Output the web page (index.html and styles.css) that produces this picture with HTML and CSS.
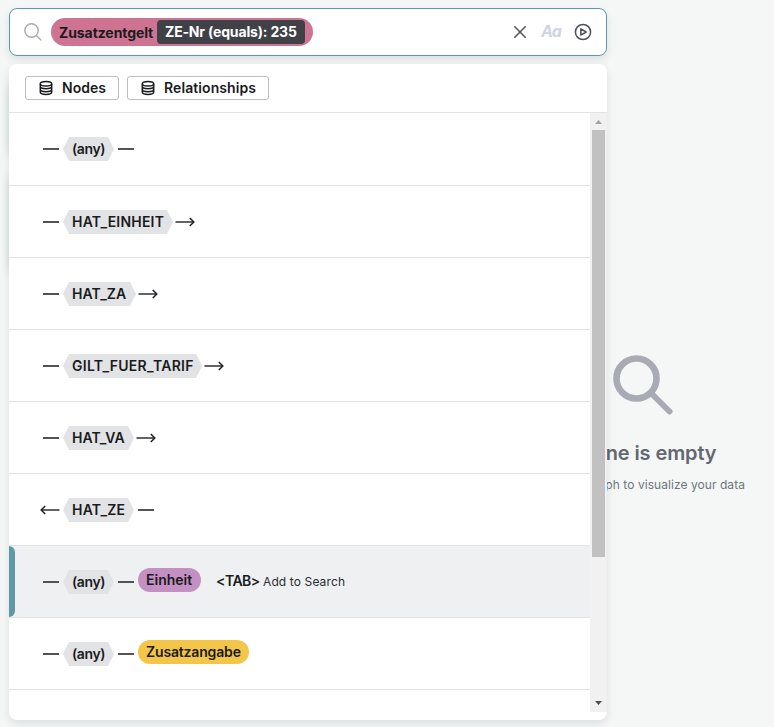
FILE: index.html
```
<!DOCTYPE html>
<html lang="en">
<head>
<meta charset="utf-8">
<title>Graph search</title>
<link rel="stylesheet" href="styles.css">
</head>
<body>
<svg class="defs" aria-hidden="true">
  <symbol id="db" viewBox="0 0 14 16"><g fill="none" stroke="#1a1b1d" stroke-width="1.5"><ellipse cx="7" cy="3.7" rx="5.7" ry="2.3"/><path d="M1.3 3.7v8.4c0 1.3 2.5 2.4 5.7 2.4s5.7-1.1 5.7-2.4V3.7M1.3 6.6c0 1.2 2.5 2.1 5.7 2.1s5.7-.9 5.7-2.1M1.3 9.6c0 1.2 2.5 2.1 5.7 2.1s5.7-.9 5.7-2.1"/></g></symbol>
  <symbol id="arrow" viewBox="0 0 20 12"><path d="M.5 6H18" fill="none" stroke="#3c3d40" stroke-width="1.6"/><path d="M14.8 2 18.8 6l-4 4" fill="none" stroke="#1f2023" stroke-width="1.5"/></symbol>
</svg>

<section class="empty">
  <svg class="empty-icon" viewBox="0 0 60 60" fill="none" stroke="#a8abb4"><circle cx="23.5" cy="23.5" r="20" stroke-width="6.6"/><path d="M38.5 38.5 56.5 56.5" stroke-width="6" stroke-linecap="round"/></svg>
  <h1>Scene is empty</h1>
  <p>Search graph to visualize your data</p>
</section>
<div class="backdrop-card first"></div>
<div class="backdrop-card second"></div>

<main class="search">
  <div class="search-bar">
    <svg class="lens" viewBox="0 0 18 18" fill="none" stroke="#a8abb4" stroke-width="1.4" stroke-linecap="round"><circle cx="7.5" cy="7.5" r="6.7"/><path d="m12.4 12.4 4.5 4.5"/></svg>
    <div class="token"><span class="t-label">Zusatzentgelt</span><span class="filter"><span class="t-filter">ZE-Nr (equals): 235</span></span></div>
    <div class="actions">
      <svg class="close" viewBox="0 0 12 12" stroke="#4d5157" stroke-width="1.5" stroke-linecap="round"><path d="m.8.8 10.4 10.4M11.2.8.8 11.2"/></svg>
      <span class="case">Aa</span>
      <svg class="play" viewBox="0 0 18 18" fill="none" stroke="#4d5157" stroke-width="1.5" stroke-linejoin="round"><circle cx="9" cy="9" r="7.6"/><path d="M6.8 5.9v6.2L12.2 9z"/></svg>
    </div>
  </div>

  <div class="panel">
    <div class="filters">
      <button class="nodes"><svg><use href="#db"/></svg><span>Nodes</span></button>
      <button class="rels"><svg><use href="#db"/></svg><span>Relationships</span></button>
    </div>
    <div class="results">
      <ul>
        <li><i class="dash"></i><span class="tag w-any"><b>(any)</b></span><i class="dash"></i></li>
        <li><i class="dash"></i><span class="tag w-einheit"><b>HAT_EINHEIT</b></span><svg class="arrow"><use href="#arrow"/></svg></li>
        <li><i class="dash"></i><span class="tag w-za"><b>HAT_ZA</b></span><svg class="arrow"><use href="#arrow"/></svg></li>
        <li><i class="dash"></i><span class="tag w-tarif"><b>GILT_FUER_TARIF</b></span><svg class="arrow"><use href="#arrow"/></svg></li>
        <li><i class="dash"></i><span class="tag w-va"><b>HAT_VA</b></span><svg class="arrow"><use href="#arrow"/></svg></li>
        <li><svg class="arrow left"><use href="#arrow"/></svg><span class="tag w-ze"><b>HAT_ZE</b></span><i class="dash"></i></li>
        <li class="active"><i class="dash"></i><span class="tag w-any"><b>(any)</b></span><i class="dash"></i><span class="pill purple"><b>Einheit</b></span><span class="hint"><b>&lt;TAB&gt;</b><span>Add to Search</span></span></li>
        <li><i class="dash"></i><span class="tag w-any"><b>(any)</b></span><i class="dash"></i><span class="pill yellow"><b>Zusatzangabe</b></span></li>
        <li class="rest"></li>
      </ul>
      <div class="scrollbar"><span class="up"></span><span class="thumb"></span><span class="down"></span></div>
    </div>
  </div>
</main>
</body>
</html>
```

FILE: styles.css
```
* { box-sizing: border-box; }
body {
  margin: 0;
  width: 774px;
  height: 727px;
  overflow: hidden;
  position: relative;
  background: #f4f7f6;
  color: #1a1b1d;
  font-family: Inter, "Liberation Sans", sans-serif;
  font-size: 14px;
}
.defs { position: absolute; width: 0; height: 0; }
svg { display: block; flex: none; }
b, i { font-style: normal; }

.empty {
  position: absolute;
  left: 513px;
  top: 355px;
  width: 260px;
  display: flex;
  flex-direction: column;
  align-items: center;
  color: #6f757e;
  white-space: nowrap;
}
.empty-icon { width: 60px; height: 60px; }
.empty h1 { margin: 24px 0 0; font-size: 20px; line-height: 28px; font-weight: 600; color: #636770; letter-spacing: -.1px; }
.empty p { margin: 8px 0 0; width: 204px; text-align: right; font-size: 12px; line-height: 20px; letter-spacing: .06px; }

.backdrop-card { position: absolute; left: 9px; width: 300px; border-radius: 8px; background: #fff; box-shadow: 0 2px 8px rgba(12, 26, 37, .14); }
.backdrop-card.first { top: 80px; height: 75px; }
.backdrop-card.second { top: 172px; height: 100px; }

.search { position: relative; width: 598px; margin: 8px 0 0 9px; display: flex; flex-direction: column; gap: 8px; }
.search-bar {
  height: 48px;
  display: flex;
  align-items: center;
  padding: 0 14px;
  border: 1px solid #5a9aa6;
  border-radius: 8px;
  background: #fff;
  box-shadow: 0 4px 8px rgba(12, 26, 37, .1);
}
.lens { width: 18px; height: 18px; margin-left: 0; }
.token {
  width: 262px;
  height: 28px;
  margin-left: 9px;
  padding: 0 8px;
  display: flex;
  align-items: center;
  border-radius: 14px;
  background: #cf7392;
  font-weight: 700;
  white-space: nowrap;
}
.t-label { width: 98px; letter-spacing: -.08px; }
.filter { width: 148px; height: 24px; padding-left: 8px; border-radius: 4px; background: #3f4147; color: #fff; line-height: 24px; letter-spacing: -.17px; flex: none; }
.actions { margin-left: auto; display: flex; align-items: center; }
.close { width: 12px; height: 12px; }
.case { width: 20px; margin: 0 13px 0 15px; color: #cdd5e3; font-size: 16px; line-height: 20px; margin-top: -2px; font-weight: 700; font-style: italic; letter-spacing: -.8px; }
.play { width: 18px; height: 18px; }

.panel { height: 656px; border-radius: 8px; background: #fff; box-shadow: 0 4px 8px rgba(12, 26, 37, .1); }
.filters { height: 49px; display: flex; gap: 8px; padding: 12px 16px; border-bottom: 1px solid #e1e3e5; }
button {
  height: 24px;
  display: flex;
  align-items: center;
  gap: 9px;
  padding: 0 0 0 13px;
  border: 1px solid #bbbec3;
  border-radius: 3px;
  background: #fff;
  color: #1a1b1d;
  font: 600 14px/22px Inter, sans-serif;
}
button svg { width: 14px; height: 16px; }
.nodes { width: 94px; }
.rels { width: 142px; letter-spacing: .08px; }

.results { height: 599px; display: flex; overflow: hidden; }
ul { flex: 1; margin: 0; padding: 0; list-style: none; }
li { height: 72px; display: flex; align-items: flex-start; padding: 24px 0 0 34px; border-bottom: 1px solid #e1e3e5; }
li:first-child { height: 73px; }
li.rest { border: 0; }
.dash { width: 16px; height: 2px; margin-top: 11px; background: #525357; flex: none; }
.tag {
  height: 24px;
  margin: 0 4px;
  padding-left: 9px;
  background: #e2e3e5;
  clip-path: polygon(6px 0, calc(100% - 6px) 0, 100% 50%, calc(100% - 6px) 100%, 6px 100%, 0 50%);
  line-height: 24px;
  white-space: nowrap;
  flex: none;
}
.w-any { width: 51px; letter-spacing: -.4px; }
.w-einheit { width: 110px; letter-spacing: .2px; }
.w-za { width: 73px; letter-spacing: .1px; }
.w-tarif { width: 139px; letter-spacing: .26px; }
.w-va, .w-ze { width: 71px; }
.w-ze { letter-spacing: .2px; }
.tag b, .pill b { font-weight: 600; }
.arrow { width: 20px; height: 12px; margin: 6px 0 0 -2px; }
.arrow.left { margin: 6px -1px 0 -3px; transform: rotate(180deg); }
.active { position: relative; background: #eef0f2; }
.active::before { content: ""; position: absolute; left: 0; top: 0; width: 6px; height: 71px; border-radius: 0 6px 6px 0; background: #5f99a6; }
.pill { height: 24px; margin: -2px 0 0 4px; padding-left: 8px; border-radius: 12px; line-height: 24px; white-space: nowrap; }
.purple { width: 63px; background: #c490c3; }
.yellow { width: 111px; background: #f3c549; letter-spacing: -.16px; }
.hint { display: flex; align-items: baseline; margin-left: 15px; line-height: 23px; white-space: nowrap; margin-top: -1px; }
.hint b { width: 47px; font-weight: 600; letter-spacing: -.5px; }
.hint span { font-size: 12px; color: #2b2c30; letter-spacing: .12px; }

.scrollbar { width: 17px; height: 599px; display: flex; flex-direction: column; align-items: center; background: #f1f1f1; flex: none; }
.thumb { width: 13px; height: 427px; background: #c1c1c1; }
.up, .down { width: 7px; height: 4px; }
.up { margin: 7px 0 6px; background: #a3a3a3; clip-path: polygon(50% 0, 100% 100%, 0 100%); }
.down { margin-top: auto; margin-bottom: 7px; background: #505050; clip-path: polygon(0 0, 100% 0, 50% 100%); }
```
